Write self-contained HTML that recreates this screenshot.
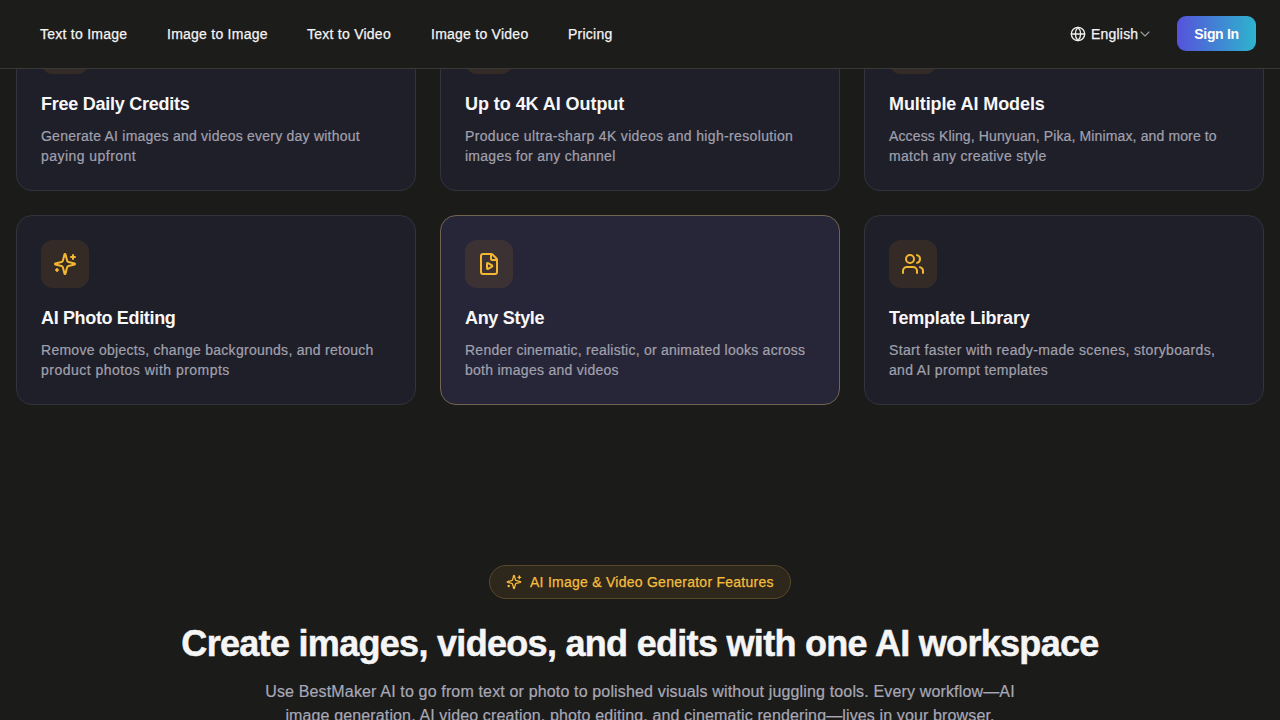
<!DOCTYPE html>
<html><head><meta charset="utf-8">
<style>
*{box-sizing:border-box;margin:0;padding:0}
html,body{width:1280px;height:720px;overflow:hidden;background:#1b1b1a;font-family:"Liberation Sans",sans-serif;color:#f4f4f5}
.hdr{position:absolute;left:0;top:0;width:1280px;height:69px;background:#1c1c1b;border-bottom:1px solid #383837;z-index:10}
.nav a{position:absolute;top:24px;font-size:14px;line-height:20px;color:#f4f4f4;text-decoration:none;letter-spacing:0.25px;white-space:nowrap;-webkit-text-stroke:0.25px #f4f4f4}
.lang{position:absolute;left:1070px;top:24px;height:20px}
.lang svg{position:absolute}
.lang span{position:absolute;left:21px;top:0;font-size:14px;line-height:20px;color:#f4f4f4;white-space:nowrap;letter-spacing:0.2px;-webkit-text-stroke:0.25px #f4f4f4}
.btn{position:absolute;left:1177px;top:16px;width:79px;height:35px;border-radius:9px;background:linear-gradient(90deg,#5652db,#2db4cd);color:#fff;font-size:14px;font-weight:700;line-height:37px;text-align:center;letter-spacing:-0.333px}
.card{position:absolute;width:400px;height:190px;border-radius:16px;background:#1f1f2a;border:1px solid #33333d;padding:24px}
.card.hov{background:#272638;border-color:#716450}
.ib{width:48px;height:48px;border-radius:12px;background:rgba(245,158,11,0.1);display:flex;align-items:center;justify-content:center}
.ib svg{width:24px;height:24px}
.card h3{margin-top:16px;font-size:18px;line-height:28px;font-weight:700;letter-spacing:-0.3px;color:#f7f7f7;white-space:nowrap}
.card p{margin-top:8px;font-size:14px;line-height:20px;color:#a1a1ad;letter-spacing:0.2px;white-space:nowrap;-webkit-text-stroke:0.2px #a1a1ad}
.badge{position:absolute;left:489px;top:565px;width:302px;height:34px;border-radius:17px;background:#2e271b;border:1px solid #5a4929;color:#f4be3e}
.badge svg{position:absolute;left:16px;top:8px}
.badge span{position:absolute;left:40px;top:6px;font-size:14px;line-height:20px;letter-spacing:0.257px;white-space:nowrap;-webkit-text-stroke:0.25px #f4be3e}
h1{position:absolute;left:0;width:1280px;top:622px;text-align:center;font-size:36px;line-height:44px;font-weight:700;letter-spacing:-0.698px;color:#f5f5f5;white-space:nowrap;-webkit-text-stroke:0.5px #f5f5f5}
.para{position:absolute;left:0;width:1280px;top:680px;text-align:center;font-size:16px;line-height:24px;color:#a8a8b6;white-space:nowrap;-webkit-text-stroke:0.2px #a8a8b6}
</style></head><body>
<div class="card" style="left:16px;top:1px">
  <div class="ib"></div>
  <h3 style="letter-spacing:-0.253px">Free Daily Credits</h3>
  <p><span style="letter-spacing:0.228px">Generate AI images and videos every day without</span><br><span style="letter-spacing:0.46px">paying upfront</span></p>
</div>
<div class="card" style="left:440px;top:1px">
  <div class="ib"></div>
  <h3 style="letter-spacing:-0.059px">Up to 4K AI Output</h3>
  <p><span style="letter-spacing:0.346px">Produce ultra-sharp 4K videos and high-resolution</span><br><span style="letter-spacing:0.262px">images for any channel</span></p>
</div>
<div class="card" style="left:864px;top:1px">
  <div class="ib"></div>
  <h3 style="letter-spacing:-0.088px">Multiple AI Models</h3>
  <p><span style="letter-spacing:0.131px">Access Kling, Hunyuan, Pika, Minimax, and more to</span><br><span style="letter-spacing:0.304px">match any creative style</span></p>
</div>
<div class="card" style="left:16px;top:215px">
  <div class="ib"><svg viewBox="0 0 24 24" fill="none" stroke="#f5b731" stroke-width="2" stroke-linecap="round" stroke-linejoin="round"><path d="M9.937 15.5A2 2 0 0 0 8.5 14.063l-6.135-1.582a.5.5 0 0 1 0-.962L8.5 9.936A2 2 0 0 0 9.937 8.5l1.582-6.135a.5.5 0 0 1 .963 0L14.063 8.5A2 2 0 0 0 15.5 9.937l6.135 1.581a.5.5 0 0 1 0 .964L15.5 14.063a2 2 0 0 0-1.437 1.437l-1.582 6.135a.5.5 0 0 1-.963 0z"/><path d="M20 3v4"/><path d="M22 5h-4"/><path d="M4 17v2"/><path d="M5 18H3"/></svg></div>
  <h3 style="letter-spacing:-0.347px">AI Photo Editing</h3>
  <p><span style="letter-spacing:0.272px">Remove objects, change backgrounds, and retouch</span><br><span style="letter-spacing:0.48px">product photos with prompts</span></p>
</div>
<div class="card hov" style="left:440px;top:215px">
  <div class="ib"><svg viewBox="0 0 24 24" fill="none" stroke="#f5b731" stroke-width="2" stroke-linecap="round" stroke-linejoin="round"><path d="M6 22a2 2 0 0 1-2-2V4a2 2 0 0 1 2-2h8a2.4 2.4 0 0 1 1.704.706l3.588 3.588A2.4 2.4 0 0 1 20 8v12a2 2 0 0 1-2 2z"/><path d="M14 2v5a1 1 0 0 0 1 1h5"/><path d="M15.033 13.44a.647.647 0 0 1 0 1.12l-4.065 2.352a.645.645 0 0 1-.968-.56v-4.704a.645.645 0 0 1 .967-.56z"/></svg></div>
  <h3 style="letter-spacing:-0.312px">Any Style</h3>
  <p><span style="letter-spacing:0.24px">Render cinematic, realistic, or animated looks across</span><br><span style="letter-spacing:0.271px">both images and videos</span></p>
</div>
<div class="card" style="left:864px;top:215px">
  <div class="ib"><svg viewBox="0 0 24 24" fill="none" stroke="#f5b731" stroke-width="2" stroke-linecap="round" stroke-linejoin="round"><path d="M16 21v-2a4 4 0 0 0-4-4H6a4 4 0 0 0-4 4v2"/><path d="M16 3.128a4 4 0 0 1 0 7.744"/><path d="M22 21v-2a4 4 0 0 0-3-3.87"/><circle cx="9" cy="7" r="4"/></svg></div>
  <h3 style="letter-spacing:-0.2px">Template Library</h3>
  <p><span style="letter-spacing:0.354px">Start faster with ready-made scenes, storyboards,</span><br><span style="letter-spacing:0.318px">and AI prompt templates</span></p>
</div>

<div class="hdr">
  <div class="nav">
    <a style="left:40px">Text to Image</a>
    <a style="left:167px">Image to Image</a>
    <a style="left:307px">Text to Video</a>
    <a style="left:431px">Image to Video</a>
    <a style="left:568px">Pricing</a>
  </div>
  <div class="lang">
    <svg width="16" height="16" viewBox="0 0 24 24" fill="none" stroke="#f0f0f0" stroke-width="2" stroke-linecap="round" stroke-linejoin="round" style="left:0;top:2px"><circle cx="12" cy="12" r="10"/><path d="M12 2a14.5 14.5 0 0 0 0 20 14.5 14.5 0 0 0 0-20"/><path d="M2 12h20"/></svg>
    <span>English</span>
    <svg width="16" height="16" viewBox="0 0 24 24" fill="none" stroke="#9a9a9a" stroke-width="1.6" stroke-linecap="round" stroke-linejoin="round" style="left:67px;top:2px"><path d="m6 9 6 6 6-6"/></svg>
  </div>
  <div class="btn">Sign In</div>
</div>

<div class="badge">
  <svg width="16" height="16" viewBox="0 0 24 24" fill="none" stroke="#f6bb3c" stroke-width="2" stroke-linecap="round" stroke-linejoin="round"><path d="M9.937 15.5A2 2 0 0 0 8.5 14.063l-6.135-1.582a.5.5 0 0 1 0-.962L8.5 9.936A2 2 0 0 0 9.937 8.5l1.582-6.135a.5.5 0 0 1 .963 0L14.063 8.5A2 2 0 0 0 15.5 9.937l6.135 1.581a.5.5 0 0 1 0 .964L15.5 14.063a2 2 0 0 0-1.437 1.437l-1.582 6.135a.5.5 0 0 1-.963 0z"/><path d="M20 3v4"/><path d="M22 5h-4"/><path d="M4 17v2"/><path d="M5 18H3"/></svg>
  <span>AI Image &amp; Video Generator Features</span>
</div>
<h1>Create images, videos, and edits with one AI workspace</h1>
<div class="para"><span style="letter-spacing:0.154px">Use BestMaker AI to go from text or photo to polished visuals without juggling tools. Every workflow—AI</span><br><span style="letter-spacing:0.13px">image generation, AI video creation, photo editing, and cinematic rendering—lives in your browser.</span></div>
</body></html>
